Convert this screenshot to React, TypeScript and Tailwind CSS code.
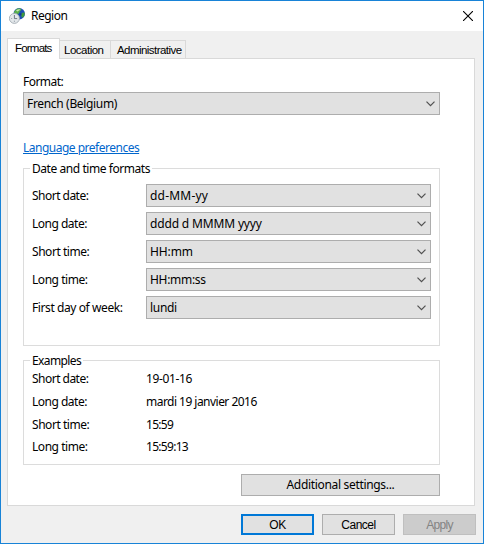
import React from "react";

interface FormatRow {
  label: string;
  value: string;
  labelClass: string;
  valueClass: string;
}

const formatRows: FormatRow[] = [
  { label: "Short date:", value: "dd-MM-yy", labelClass: "tracking-[-0.52px]", valueClass: "tracking-[0.2px]" },
  { label: "Long date:", value: "dddd d MMMM yyyy", labelClass: "tracking-[-0.5px]", valueClass: "tracking-[-0.16px]" },
  { label: "Short time:", value: "HH:mm", labelClass: "tracking-[-0.45px]", valueClass: "tracking-[-0.1px]" },
  { label: "Long time:", value: "HH:mm:ss", labelClass: "tracking-[-0.45px]", valueClass: "tracking-[-0.3px]" },
  { label: "First day of week:", value: "lundi", labelClass: "tracking-[-0.41px]", valueClass: "tracking-[-0.3px]" },
];

const exampleRows: FormatRow[] = [
  { label: "Short date:", value: "19-01-16", labelClass: "tracking-[-0.52px]", valueClass: "tracking-[-0.35px]" },
  { label: "Long date:", value: "mardi 19 janvier 2016", labelClass: "tracking-[-0.5px]", valueClass: "tracking-[-0.53px]" },
  { label: "Short time:", value: "15:59", labelClass: "tracking-[-0.45px]", valueClass: "tracking-[-0.7px]" },
  { label: "Long time:", value: "15:59:13", labelClass: "tracking-[-0.45px]", valueClass: "tracking-[-0.7px]" },
];

function RegionIcon() {
  return (
    <svg width="16" height="16" viewBox="0 0 16 16">
      <circle cx="10.2" cy="5.8" r="5.7" fill="#1c4fb5" />
      <path d="M5.2 3.4 8.2.6 11.6.4 12.4 2 10.6 3.4 10 5.4 8 6 5 5.6z" fill="#5bb04a" />
      <path d="M7 2.2 10.6 1 10.8 2 8.4 3.6z" fill="#c4e8b0" />
      <path d="M12.6 5 15.8 4.6 15.4 7.8 13.4 9.8 12.2 8z" fill="#3f9a3c" />
      <path d="M10.6 5.2h1.8v2.2h-1.8z" fill="#123a94" />
      <circle cx="5.4" cy="10.4" r="5" fill="#e3e7ea" stroke="#a3abb3" strokeWidth="0.9" />
      <path d="M5.4 7v3.6H8.2" fill="none" stroke="#5f6b78" strokeWidth="0.9" />
      <path d="M5.4 12.6v1.4M2 10.5h1.2" stroke="#8f99a3" strokeWidth="0.8" />
    </svg>
  );
}

function Select(props: { value: string; className: string; textClass: string }) {
  const { value, className, textClass } = props;
  return (
    <div
      className={`flex h-[23px] items-center justify-between border border-[#adadad] bg-[#e1e1e1] pr-1 pl-[3px] ${className}`}
    >
      <span className={textClass}>{value}</span>
      <svg width="9" height="6" viewBox="0 0 9 6">
        <path d="M.5.7 4.5 4.7 8.5.7" fill="none" stroke="#505050" strokeWidth="1.2" />
      </svg>
    </div>
  );
}

function Group(props: { title: string; className: string; titleClass: string; children: React.ReactNode }) {
  const { title, className, titleClass, children } = props;
  return (
    <div className={`relative w-[417px] border border-[#dcdcdc] ${className}`}>
      <span className={`absolute top-[-8px] left-[6px] bg-white px-[2px] leading-4 ${titleClass}`}>{title}</span>
      {children}
    </div>
  );
}

function App() {
  return (
    <div className="flex h-[544px] w-[484px] flex-col border border-[#1883d7] bg-[#f0f0f0] font-['Noto_Sans','Open_Sans',sans-serif] text-[12px] leading-4 whitespace-nowrap text-black">
      <div className="flex h-[30px] shrink-0 items-center bg-white pr-[10px] pl-2">
        <RegionIcon />
        <span className="ml-[6px] flex-1 tracking-[-0.5px]">Region</span>
        <svg width="10" height="10" viewBox="0 0 10 10">
          <path d="M0 0 10 10M10 0 0 10" stroke="#000" strokeWidth="1.1" />
        </svg>
      </div>

      <div className="mt-[7px] ml-[6px] flex h-[20px] shrink-0 items-end font-['Liberation_Sans',sans-serif] text-[11.5px]">
        <div className="z-10 mb-[-1px] h-[21px] w-[53px] border border-b-0 border-[#d9d9d9] bg-white pt-px pl-[7px]">
          <span className="tracking-[-0.8px]">Formats</span>
        </div>
        <div className="h-[18px] w-[51px] border-t border-r border-[#d9d9d9] pt-px pl-1">
          <span className="tracking-[-0.5px]">Location</span>
        </div>
        <div className="h-[18px] w-[75px] border-t border-r border-[#d9d9d9] pt-px pl-[6px]">
          <span className="tracking-[-0.55px]">Administrative</span>
        </div>
      </div>

      <div className="ml-[6px] flex h-[448px] w-[468px] shrink-0 flex-col border border-[#d9d9d9] bg-white pl-[15px]">
        <span className="mt-[15px] tracking-[-0.55px]">Format:</span>
        <Select value="French (Belgium)" className="mt-[2px] w-[417px]" textClass="tracking-[-0.33px]" />
        <a className="mt-[25px] w-fit tracking-[-0.5px] text-[#0066cc] underline underline-offset-1">
          Language preferences
        </a>

        <Group title="Date and time formats" className="mt-3 h-[178px] pt-[15px] pl-2" titleClass="tracking-[-0.44px]">
          <div className="flex flex-col gap-[5px]">
            {formatRows.map((row) => (
              <div key={row.label} className="flex items-center">
                <div className="w-[114px]">
                  <span className={row.labelClass}>{row.label}</span>
                </div>
                <Select value={row.value} className="w-[285px]" textClass={row.valueClass} />
              </div>
            ))}
          </div>
        </Group>

        <Group title="Examples" className="mt-[14px] h-[105px] pt-[10.4px] pl-2" titleClass="tracking-[-0.6px]">
          <div className="flex flex-col gap-[6.6px]">
            {exampleRows.map((row) => (
              <div key={row.label} className="flex">
                <div className="w-[114px]">
                  <span className={row.labelClass}>{row.label}</span>
                </div>
                <span className={row.valueClass}>{row.value}</span>
              </div>
            ))}
          </div>
        </Group>

        <button className="mt-[9px] ml-[218px] h-[22px] w-[199px] border border-[#adadad] bg-[#e1e1e1] leading-4 tracking-[-0.32px]">
          Additional settings...
        </button>
      </div>

      <div className="mt-2 flex justify-end gap-2 pr-[7px] font-['Liberation_Sans',sans-serif]">
        <button className="h-[21px] w-[73px] border-2 border-[#0078d7] bg-[#e1e1e1] leading-4 tracking-[-0.5px]">OK</button>
        <button className="h-[21px] w-[73px] border border-[#adadad] bg-[#e1e1e1] leading-4 tracking-[-0.5px]">Cancel</button>
        <button className="h-[21px] w-[73px] border border-[#bfbfbf] bg-[#cccccc] leading-4 tracking-[-0.7px] text-[#838383]">
          Apply
        </button>
      </div>
    </div>
  );
}

export default App;
